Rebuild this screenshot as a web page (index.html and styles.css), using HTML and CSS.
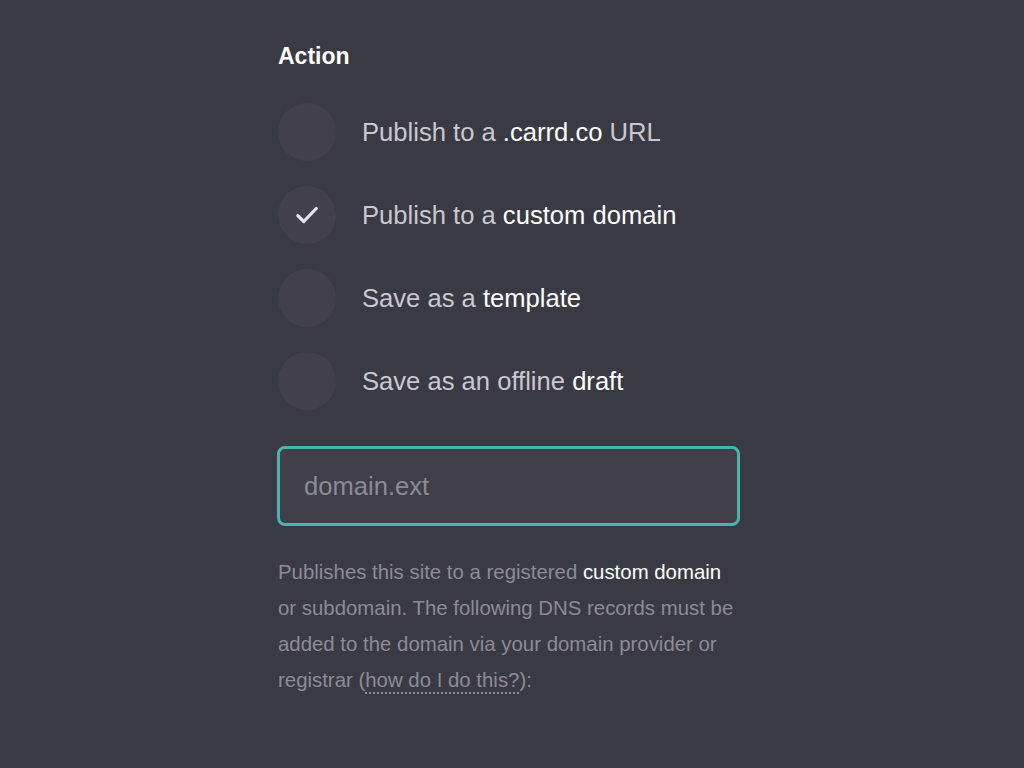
FILE: index.html
```html
<!DOCTYPE html>
<html>
<head>
<meta charset="utf-8">
<link rel="stylesheet" href="styles.css">
</head>
<body>
<div class="panel">
  <h2 class="title">Action</h2>
  <ul class="options">
    <li class="option"><span class="radio"></span><span class="label">Publish to a <b>.carrd.co</b> URL</span></li>
    <li class="option"><span class="radio checked"><svg width="26" height="26" viewBox="0 0 24 24"><path d="M3.5 12.5l5.5 5.5L20.5 6" fill="none" stroke="#e6e5ea" stroke-width="3" stroke-linecap="round" stroke-linejoin="round"/></svg></span><span class="label">Publish to a <b>custom domain</b></span></li>
    <li class="option"><span class="radio"></span><span class="label">Save as a <b>template</b></span></li>
    <li class="option"><span class="radio"></span><span class="label">Save as an offline <b>draft</b></span></li>
  </ul>
  <div class="field"><input class="input" type="text" placeholder="domain.ext"></div>
  <p class="note">Publishes this site to a registered <b>custom domain</b> or subdomain. The following DNS records must be added to the domain via your domain provider or registrar (<span class="help">how do I do this?</span>):</p>
</div>
</body>
</html>
```
FILE: styles.css
```css
html, body {
  margin: 0;
  padding: 0;
  background: #3a3a44;
  font-family: "Liberation Sans", Arial, sans-serif;
}
.panel {
  width: 463px;
  margin: 0 0 0 277px;
  padding-top: 44px;
}
.title {
  margin: 0 0 0 1px;
  font-size: 23px;
  font-weight: bold;
  color: #ffffff;
  line-height: 24px;
}
.options {
  list-style: none;
  margin: 35px 0 0 0;
  padding: 0;
  display: flex;
  flex-direction: column;
  gap: 25px;
}
.option {
  display: flex;
  align-items: center;
  gap: 26px;
  height: 58px;
}
.radio {
  width: 58px;
  height: 58px;
  border-radius: 50%;
  background: #41404b;
  display: flex;
  align-items: center;
  justify-content: center;
  flex-shrink: 0;
  margin-left: 1px;
}
.label {
  font-size: 25.6px;
  color: #c9c8cf;
}
.label b {
  font-weight: normal;
  color: #ffffff;
}
.field {
  margin-top: 36px;
}
.input {
  box-sizing: border-box;
  width: 463px;
  height: 80px;
  border: 3px solid #4bb3ad;
  border-radius: 8px;
  background: #3f3e49;
  padding: 0 24px;
  font-family: "Liberation Sans", Arial, sans-serif;
  font-size: 25.6px;
  color: #ffffff;
  outline: none;
  display: block;
}
.input::placeholder {
  color: #8c8b96;
}
.note {
  margin: 28px 0 0 1px;
  font-size: 20.4px;
  line-height: 36px;
  color: #8c8b96;
}
.note b {
  font-weight: normal;
  color: #ffffff;
}
.help {
  text-decoration: underline dotted #8c8b96;
  text-decoration-thickness: 1.5px;
  text-underline-offset: 5px;
}
```
